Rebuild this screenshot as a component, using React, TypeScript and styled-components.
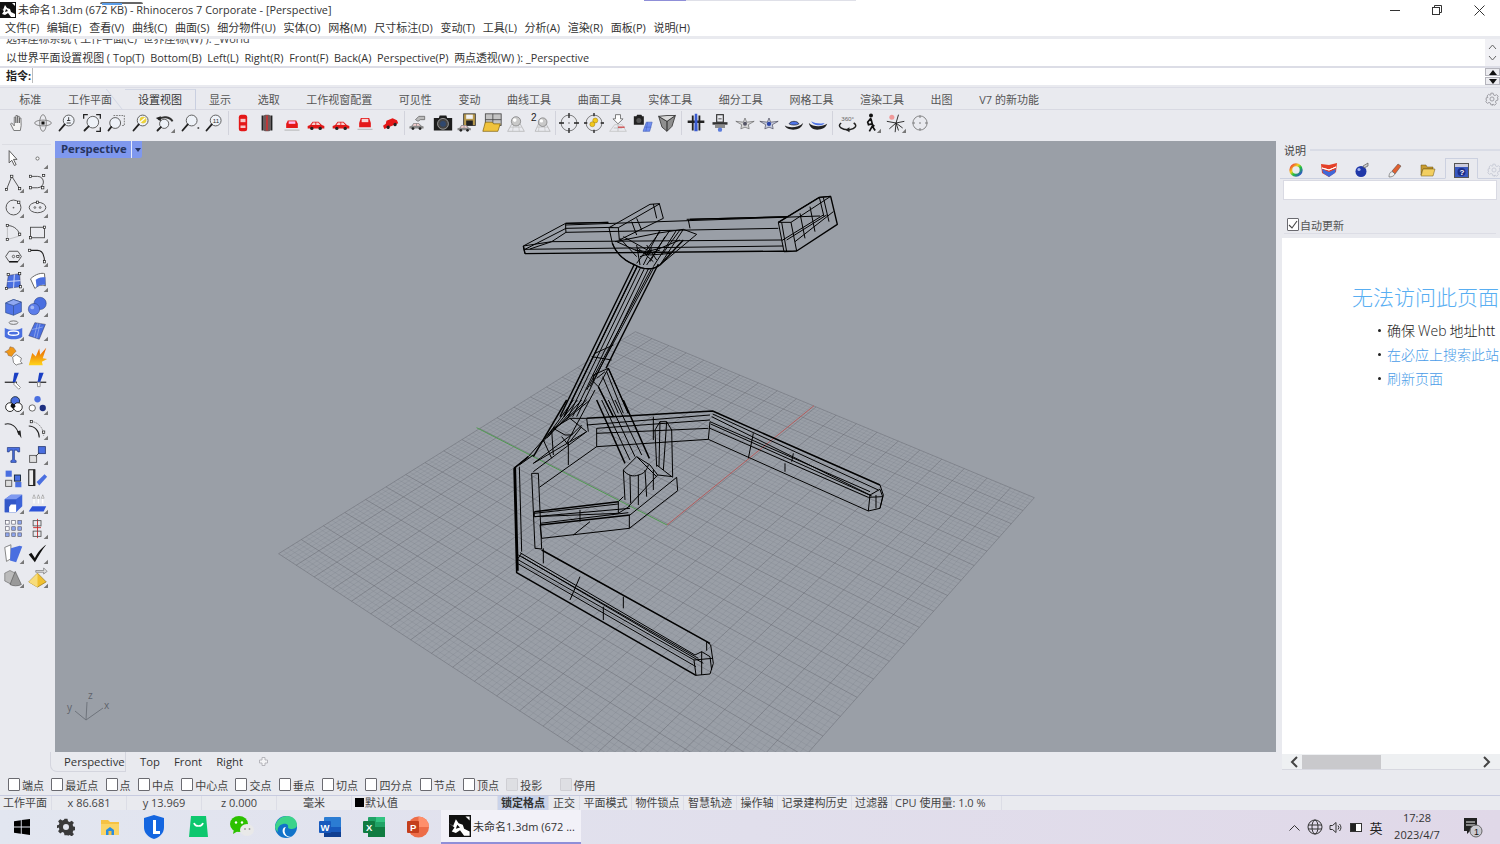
import React, { useMemo } from "react";
import styled, { createGlobalStyle } from "styled-components";

const FONT = `"Open Sans", "Noto Sans CJK SC", sans-serif`;

const Global = createGlobalStyle`
  html, body { margin: 0; padding: 0; background: #e9eaef; overflow: hidden; }
  * { box-sizing: border-box; }
`;

const Page = styled.div`
  width: 1500px; height: 844px; display: flex; flex-direction: column; position: relative;
  overflow: hidden; background: #e9eaef; font-family: ${FONT}; font-size: 11px; color: #333;
`;

/* ---------- title + menu ---------- */
const TitleBar = styled.div`
  height: 20px; background: #fff; display: flex; align-items: center; position: relative; flex: none;
`;
const TitleText = styled.span`
  font-size: 10.9px; margin-left: 2px; color: #333; white-space: nowrap; line-height: 20px;
`;
const WindowBtns = styled.div`
  margin-left: auto; display: flex; height: 20px;
`;
const WinBtn = styled.div`
  width: 42px; display: flex; align-items: center; justify-content: center;
`;
const PreviewGhost = styled.div`
  position: absolute; left: 100px; top: 2px; width: 43px; height: 6px;
  border-top: 2px solid #666; border-radius: 2px;
  &::before { content: ""; position: absolute; left: 2px; top: -1px; width: 20px; height: 2px; background: #5c9ee8; }
`;
const TopEdge = styled.div`
  position: absolute; left: 644px; top: 0; width: 212px; height: 1px;
  background: linear-gradient(90deg, #8f8fd8 0 42px, #dfe0e8 42px);
`;
const MenuBar = styled.div`
  height: 16px; background: #fff; display: flex; align-items: center; padding-left: 5px; gap: 7.7px; flex: none;
`;
const MenuItem = styled.span`
  font-size: 11px; color: #333; white-space: nowrap; line-height: 16px;
`;
const ThinGap = styled.div<{ $h: number }>`
  height: ${(p) => p.$h}px; flex: none; background: #e9eaef;
`;

/* ---------- command area ---------- */
const History = styled.div`
  height: 29px; flex: none; background: #fff; border-bottom: 2px solid #dcdde6; display: flex; position: relative;
`;
const HistoryText = styled.div`
  flex: 1; padding-left: 6px; overflow: hidden; position: relative;
`;
const ClippedLine = styled.div`
  font-size: 10.9px; line-height: 14px; margin-top: -7px; white-space: nowrap; color: #444;
`;
const HistoryLine = styled.div`
  font-size: 10.9px; line-height: 14px; margin-top: 5px; white-space: nowrap; color: #333;
`;
const ScrollSide = styled.div`
  width: 15px; background: #f1f1f5; display: flex; flex-direction: column; align-items: center;
  justify-content: space-around; padding: 2px 0;
`;
const CommandRow = styled.div`
  height: 17px; flex: none; background: #fff; display: flex; align-items: center;
`;
const CmdLabel = styled.b`
  font-size: 11px; margin-left: 6px; margin-top: -2px; width: 27px; border-right: 1px solid #bbb; line-height: 15px; color: #222;
`;
const Spinner = styled.div`
  margin-left: auto; width: 15px; height: 17px; display: flex; flex-direction: column; gap: 1px; background: #fff;
`;
const SpinBtn = styled.div`
  flex: 1; background: #ececf0; border: 1px solid #b4b4bc; display: flex; align-items: center; justify-content: center;
`;

/* ---------- tabs + main toolbar ---------- */
const TabBar = styled.div`
  height: 23px; flex: none; border-top: 1px solid #dcdde6; border-bottom: 1px solid #d8d9e2;
  display: flex; align-items: flex-end; padding-left: 6px; position: relative;
`;
const Tab = styled.div<{ $active?: boolean }>`
  padding: 0 13.3px; font-size: 11px; height: 21px; line-height: 23px; white-space: nowrap; color: #555;
  position: relative; top: ${(p) => (p.$active ? 1 : 0)}px;
  ${(p) => p.$active && `
    padding: 0 12.8px; border-top: 1px solid #d3d7e4; border-right: 1px solid #c9cfe0; color: #333; line-height: 20px;
    &::before { content: ""; position: absolute; left: -11px; bottom: 0; width: 24px; height: 21px;
      border-left: 1px solid #d3d7e4; transform: skewX(38deg); }
  `}
`;
const TabGear = styled.div`
  position: absolute; right: 1px; top: 4px; width: 14px; height: 14px;
`;
const Toolbar = styled.div`
  height: 31px; flex: none; display: flex; align-items: flex-start; padding: 1px 0 0 6px;
`;
const Slot = styled.div`
  width: 24.5px; height: 24px; display: flex; align-items: center; justify-content: center; flex: none;
`;
const Sep = styled.div`
  width: 1px; height: 24px; background: #d2d3dc; margin: 0 1.5px; flex: none;
`;

/* ---------- work area ---------- */
const Work = styled.div`
  height: 631px; flex: none; display: flex;
`;
const WorkLeft = styled.div`
  width: 1276px; flex: none; display: flex; flex-direction: column;
`;
const MainRow = styled.div`
  height: 611px; display: flex; flex: none;
`;
const SideTools = styled.div`
  width: 55px; flex: none; padding: 5px 0 0 1px; position: relative;
  &::before { content: ""; position: absolute; left: 2px; right: 4px; top: 3px; height: 1px; background: #dcdde3; }
`;
const SideGrid = styled.div`
  display: grid; grid-template-columns: 24.5px 24.5px; grid-auto-rows: 24.7px;
`;
const Viewport = styled.div`
  flex: 1; background: #9a9fa7; position: relative; overflow: hidden;
`;
const ViewSvg = styled.svg`
  display: block; width: 1221px; height: 611px;
`;
const ViewTag = styled.div`
  position: absolute; left: 0; top: 0; height: 17px; width: 87px; background: #7f98ee; display: flex; align-items: center;
  border-bottom-right-radius: 2px;
`;
const ViewTagText = styled.b`
  font-size: 11.3px; color: #26345f; padding-left: 6px; width: 77px; line-height: 15px; height: 17px; white-space: nowrap;
  border-right: 1px solid #e8ecfb;
`;
const ViewTagCaret = styled.span`
  width: 0; height: 0; margin-left: 3px; border: 3px solid transparent; border-top: 4px solid #26345f; margin-top: 4px;
`;
const ViewTabs = styled.div`
  height: 20px; flex: none; display: flex; align-items: flex-start; padding-left: 50px;
`;
const ViewTab = styled.div<{ $active?: boolean }>`
  font-size: 11.3px; color: #333; white-space: nowrap; line-height: 19px; padding: 0 7px;
  ${(p) => p.$active && `
    padding: 0 0 0 13px; margin-right: 7px; border-right: 1px solid #d4d5de; width: 76px; height: 20px;
    border-left: 1px solid #d4d5de; border-bottom: 1px solid #d4d5de; border-bottom-left-radius: 7px;
  `}
`;
const PlusIcon = styled.svg`
  margin: 5px 0 0 9px;
`;

/* ---------- right panel ---------- */
const Panel = styled.div`
  width: 224px; flex: none; padding-left: 6px; display: flex; flex-direction: column;
`;
const PanelHead = styled.div`
  height: 17px; display: flex; align-items: center; padding-left: 2px; gap: 4px;
  font-size: 11px; color: #444; &::after { content: ""; flex: 1; height: 2px; background: #d9dce6; }
`;
const PanelTabs = styled.div`
  height: 21px; display: flex; border-bottom: 1px solid #ccd1e0; margin-left: -2px; align-items: flex-start;
`;
const PanelTab = styled.div<{ $active?: boolean }>`
  width: 33px; height: 20px; display: flex; align-items: center; justify-content: center; flex: none; padding: 4px 2px 0 0;
  ${(p) => p.$active && `
    border: 1px solid #ccd1e0; border-bottom: 1px solid #e9eaef; height: 21px; padding: 3px 0 0 0;
  `}
`;
const SearchBox = styled.div`
  height: 20px; margin: 1px 3px 0 1px; background: #fff; border: 1px solid #d9dae3;
`;
const AutoRow = styled.label`
  display: flex; align-items: center; gap: 1px; margin: 17px 4px 0 5px; height: 15px; font-size: 11px; color: #555;
`;
const CheckBox = styled.span<{ $disabled?: boolean }>`
  width: 12px; height: 13px; flex: none; border: 1px solid ${(p) => (p.$disabled ? "#cfcfd4" : "#6a6a70")}; display: flex;
  align-items: center; justify-content: center; border-radius: 1px;
  background: ${(p) => (p.$disabled ? "#dedfe3" : "#fff")};
`;
const Rule = styled.div`
  height: 1px; background: #dcdde5; margin: 1px 4px 0 2px;
`;
const Browser = styled.div`
  height: 516px; background: #fff; margin-top: 4px; overflow: hidden; padding: 44px 0 0 70px; white-space: nowrap;
`;
const Heading = styled.div`
  font-family: "Noto Sans CJK SC", sans-serif; font-weight: 300; font-size: 21px; line-height: 28px; color: #58aef2;
`;
const BulletList = styled.ul`
  list-style: none; margin: 8px 0 0; padding: 0 0 0 35px;
`;
const Bullet = styled.li<{ $link?: boolean }>`
  font-family: "Noto Sans CJK SC", sans-serif; font-weight: 300; font-size: 14px; height: 24px; line-height: 24px; position: relative;
  color: ${(p) => (p.$link ? "#4a9ce8" : "#222")};
  &::before { content: ""; position: absolute; left: -9px; top: 11px; width: 3px; height: 3px; border-radius: 50%; background: #222; }
`;
const WebWord = styled.span`
  margin: 0 3px; font-family: "Open Sans", sans-serif;
`;
const HScroll = styled.div`
  height: 16px; display: flex; align-items: center; background: #eef0f2; border-bottom: 1px solid #d7d8e0;
  padding: 0 8px 0 7px; flex: none;
`;
const HThumb = styled.div`
  width: 79px; height: 14px; background: #c9c9cc; margin-left: 3px;
`;
const Push = styled.div`
  flex: 1;
`;

/* ---------- osnap + status ---------- */
const Osnap = styled.div`
  height: 23px; flex: none; display: flex; align-items: flex-end; padding: 0 0 2px 8px; gap: 7.3px;
`;
const Snap = styled.div<{ $gapAfter?: number }>`
  display: flex; align-items: center; gap: 2px; font-size: 11px; color: #444; white-space: nowrap; height: 17px;
  margin-right: ${(p) => p.$gapAfter || 0}px;
`;
const Status = styled.div`
  height: 15px; flex: none; border-top: 1px solid #c7cbe0; display: flex; font-size: 11px; line-height: 14px; color: #444;
`;
const Cell = styled.div<{ $w: number; $center?: boolean; $on?: boolean }>`
  width: ${(p) => p.$w}px; flex: none; text-align: ${(p) => (p.$center ? "center" : "left")}; white-space: nowrap;
  border-right: 1px solid #dcdde6; padding-left: ${(p) => (p.$center ? 0 : 3)}px;
  ${(p) => p.$on && `background: #c9d3ea; font-weight: 700; color: #333;`}
`;
const Swatch = styled.span`
  display: inline-block; width: 9px; height: 9px; background: #000; margin-right: 1px;
`;

/* ---------- taskbar ---------- */
const Taskbar = styled.div`
  height: 34px; flex: none; display: flex; align-items: center; background: linear-gradient(90deg, #e2e6f0, #e0d8e8);
`;
const TaskIcon = styled.div`
  width: 44px; height: 34px; display: flex; align-items: center; justify-content: center; flex: none;
`;
const ActiveTask = styled.div`
  width: 140px; height: 34px; margin-left: 1px; background: #f2f1f8; border-bottom: 2px solid #8f8fd8; display: flex; align-items: center;
  padding-left: 8px; gap: 2px; font-size: 11px; color: #333; white-space: nowrap;
`;
const Tray = styled.div`
  margin-left: auto; display: flex; align-items: center; height: 34px;
`;
const TrayIcon = styled.div<{ $w: number }>`
  width: ${(p) => p.$w}px; display: flex; justify-content: center; align-items: center; font-size: 13px; color: #222; flex: none;
`;
const Clock = styled.div`
  width: 64px; text-align: center; font-size: 11px; line-height: 17px; color: #333; margin-left: 1px; padding-bottom: 2px;
`;
const Note = styled.div`
  width: 38px; margin-left: 5px; margin-right: 8px; display: flex; justify-content: center;
`;

/* ---------- icons ---------- */
const B = "#4a6fe0";
const Lb = "#8ea6ee";
const Car = ({ c = "#e01818", x = 0 }: { c?: string; x?: number }) => (
  <g transform={`translate(${x} 0)`}>
    <path d="M2 15.5l3-1 3-4h7l4 4 3 1v3H2z" fill={c} />
    <path d="M8.5 11.5h2.8v3H6.5zM12.3 11.5h2.4l2.4 3h-4.8z" fill="#f5d0d0" />
    <circle cx="7" cy="18.5" r="2" fill="#222" /><circle cx="17" cy="18.5" r="2" fill="#222" />
  </g>
);
const Lens = ({ cx = 14, cy = 9, r = 6.5 }: { cx?: number; cy?: number; r?: number }) => (
  <g>
    <circle cx={cx} cy={cy} r={r} fill="#eef2f8" stroke="#555" strokeWidth="1.1" />
    <path d={`M${cx - r * 0.72} ${cy + r * 0.72}L3 21`} stroke="#222" strokeWidth="2.2" strokeLinecap="round" />
  </g>
);
const Cube = () => (
  <g stroke="#34508f" strokeWidth=".8"><path d="M3 8l9-4 9 3v11l-9 4-9-3z" fill="#4f74e6" /><path d="M3 8l9 3 9-4-9-3z" fill="#8fa8f2" /><path d="M12 11v11" fill="none" /></g>
);
const Pt = ({ x, y }: { x: number; y: number }) => <rect x={x - 1.3} y={y - 1.3} width="2.6" height="2.6" fill="#fff" stroke="#222" strokeWidth=".8" />;
const Line = "#444";

const ICONS: Record<string, React.ReactNode> = {
  hand: <path d="M7 21l-4-8 1.5-1 3 3.5V5h1.6l.4 7V3h1.8l.4 9V4h1.8l.3 8V6h1.7l.3 9-1 6z" fill="#f4f4f4" stroke="#666" strokeWidth="1" />,
  orbit: <g fill="none" stroke="#777"><ellipse cx="12" cy="12" rx="4" ry="10" /><ellipse cx="12" cy="12" rx="10" ry="3.5" /><circle cx="12" cy="12" r="2.2" fill="#111" /></g>,
  zoomd: <g><Lens /><path d="M14 5v4M12 9h4M11.5 12h5" stroke="#222" fill="none" /></g>,
  zoomext: <g><Lens cx={13} cy={11} r={7} /><path d="M2 7V2h5M17 2h5v5M17 22h5v-5" fill="none" stroke="#222" strokeWidth="1.5" /></g>,
  zoomwin: <g><Lens cx={11} cy={12} r={6.5} /><path d="M9 3h13v12H19" fill="none" stroke="#666" strokeDasharray="2 1.2" /></g>,
  zoomsel: <g><Lens /><circle cx="14.5" cy="8.5" r="4" fill="#ecd23c" /><path d="M11 11l6-5" stroke="#fff" strokeWidth="1.5" /></g>,
  zoomback: <g><Lens cx={11} cy={13} r={5.5} /><path d="M4 8a10 8 0 0 1 17 2" fill="none" stroke="#333" strokeWidth="2.4" /><path d="M1 6l6-2v6z" fill="#222" /><path d="M24 19v5h-5z" fill="#777" /></g>,
  zoomout: <g><Lens /><rect x="21" y="17" width="2" height="2" fill="#444" /></g>,
  zoom11: <g><Lens /><text x="10.5" y="12" fontSize="7.5" fill="#333" fontFamily="Liberation Sans">11</text></g>,
  cartop: <g><rect x="7" y="2" width="10" height="20" rx="3" fill="#e41818" /><rect x="9" y="7" width="6" height="4" fill="#f6c7c7" /><rect x="9" y="15" width="6" height="3" fill="#f6c7c7" /></g>,
  carbot: <g><rect x="5.5" y="3" width="2.5" height="18" fill="#222" /><rect x="16" y="3" width="2.5" height="18" fill="#222" /><rect x="8" y="2" width="8" height="20" rx="2" fill="#6d5a5a" /><rect x="11" y="3" width="2" height="18" fill="#c33" /></g>,
  carback: <g><path d="M5 18v-5l2-4h10l2 4v5z" fill="#e41818" /><rect x="8" y="10" width="8" height="3" fill="#fbe" /><rect x="3" y="20" width="18" height="1" fill="#aaa" /></g>,
  carside: <Car />,
  carside2: <Car />,
  carfront: <g><path d="M5 17v-5l2-6h10l2 6v5z" fill="#e41818" /><rect x="8" y="7" width="8" height="4" fill="#f7d5d5" /><rect x="3" y="19" width="18" height="1" fill="#aaa" /></g>,
  carpersp: <g transform="rotate(-22 12 12)"><path d="M3 12l4-1 2-3h8l4 4v4H3z" fill="#e41818" /><circle cx="8" cy="16" r="2" fill="#222" /><circle cx="17" cy="16" r="2" fill="#222" /></g>,
  carcam: <g><g transform="translate(0 3) scale(.85)"><Car c="#888" /></g><path d="M9 8l4-4h7v4h-5l-3 2z" fill="#bbb" stroke="#555" strokeWidth=".8" /></g>,
  camera: <g><path d="M1 6h6l1-3h8l1 3h6v15H1z" fill="#1d1d1d" /><circle cx="12" cy="13" r="6.5" fill="#444" stroke="#aaa" /><circle cx="12" cy="13" r="3.5" fill="#30486e" /></g>,
  save: <g><rect x="8" y="1" width="14" height="14" fill="#b99a4d" stroke="#333" /><rect x="11" y="2" width="8" height="5" fill="#f2f2f2" /><rect x="11" y="9" width="8" height="6" fill="#222" /><g transform="translate(-1 6) scale(.8)"><Car c="#888" /></g></g>,
  folder: <g><rect x="4" y="1" width="19" height="14" fill="#c4c4c4" stroke="#444" /><path d="M13 1v14M4 8h19" stroke="#444" /><path d="M1 22l3-11h8l2 2h8l-3 9z" fill="#f0c33c" stroke="#7a5a00" strokeWidth=".8" /></g>,
  ball: <g><path d="M2 22l5-9h10l5 9z" fill="none" stroke="#aaa" strokeWidth=".8" /><path d="M9 13L8 22M15 13l1 9M5 17h14" stroke="#bbb" strokeWidth=".7" /><circle cx="12" cy="10" r="5.6" fill="#c9c9c9" stroke="#555" strokeWidth=".6" /><circle cx="10.5" cy="8.5" r="2.2" fill="#fff" /></g>,
  ball2: <g><path d="M5 22l4-9h9l5 9z" fill="none" stroke="#aaa" strokeWidth=".8" /><path d="M10 13l-1 9M16 13l1 9M7 17h14" stroke="#bbb" strokeWidth=".7" /><circle cx="14" cy="11" r="5.2" fill="#c9c9c9" stroke="#555" strokeWidth=".6" /><circle cx="12.5" cy="9.5" r="2" fill="#fff" /><text x="0" y="10" fontSize="12" fill="#222" fontFamily="Liberation Sans">2</text></g>,
  target: <g fill="none"><circle cx="12" cy="12" r="9.5" stroke="#555" strokeWidth=".9" /><path d="M12 0v6M12 18v6M0 12h6M18 12h6" stroke="#222" strokeWidth="1.6" /><circle cx="12" cy="12" r="1" fill="#666" /></g>,
  targety: <g fill="none"><circle cx="12" cy="12" r="9.5" stroke="#555" strokeWidth=".9" /><path d="M12 0v4M12 20v4M0 12h4M20 12h4" stroke="#222" strokeWidth="1.6" /><circle cx="13.5" cy="9" r="3" fill="#f2c81c" stroke="#8a6a00" strokeWidth=".5" /><circle cx="10" cy="13.5" r="3" fill="#f2c81c" stroke="#8a6a00" strokeWidth=".5" /></g>,
  plane: <g><path d="M2 22l6-8h9l5 8z" fill="none" stroke="#bbb" strokeWidth=".8" /><path d="M7 18h10M12 14v8" stroke="#bbb" /><path d="M12 17h8" stroke="#c33" strokeWidth="1.4" /><path d="M9 2h6v5h3l-6 6-6-6h3z" fill="#fff" stroke="#555" strokeWidth=".9" /></g>,
  campl: <g><path d="M1 4h3l1-2h5l1 2h2v10H1z" fill="#222" /><circle cx="7" cy="9" r="3" fill="#555" /><path d="M12 22l4-11h7l-3 11z" fill="#6f8df0" stroke="#3e5bb8" strokeWidth=".7" /><path d="M14 17h8M17.5 11l-2 11" stroke="#3e5bb8" strokeWidth=".6" /></g>,
  cubev: <g stroke="#333"><path d="M2 4l10 6 10-7-4 13-6 6-6-5z" fill="#8f8f8f" /><path d="M2 4l10-1 10 0-10 7z" fill="#d9d9d9" /><path d="M12 10v12" fill="none" strokeWidth="1.4" /></g>,
  pltop: <g><path d="M2 9h20v3H2z" fill="#222" /><path d="M10.5 1h3l.5 21h-4z" fill="#3a5bd0" /><rect x="7" y="3" width="2.2" height="18" fill="#222" /><rect x="15" y="3" width="2.2" height="18" fill="#222" /></g>,
  plfront: <g><rect x="3" y="11" width="18" height="3" fill="#333" /><rect x="8" y="2" width="8" height="9" fill="none" stroke="#333" strokeWidth="1.4" /><path d="M6 14h12v4H6z" fill="#8c8c8c" /><circle cx="12" cy="20" r="2.6" fill="#5a7bdc" /><path d="M10 7h4" stroke="#333" /></g>,
  star1: <g><path d="M1 10l9 1 2-5 2 5 9-1-7 4 1 5-5-2-5 2 1-5z" fill="#d8d8d8" stroke="#555" strokeWidth=".7" /><circle cx="12" cy="13" r="2.4" fill="#556" /></g>,
  star2: <g><path d="M1 10l9 1 2-5 2 5 9-1-7 4 1 5-5-2-5 2 1-5z" fill="#c8cde0" stroke="#334" strokeWidth=".7" /><circle cx="12" cy="13" r="2.6" fill="#2d46a8" /></g>,
  ufo1: <g><path d="M1 15c5 3 16 3 22-3-2 6-6 8-12 8-5 0-9-2-10-5z" fill="#222" /><path d="M6 13c2-4 10-4 12 0-3 2-9 2-12 0z" fill="#4f74e6" stroke="#222" strokeWidth=".8" /></g>,
  ufo2: <g><path d="M1 12c5 5 16 5 22 1-2 5-6 7-12 7-5 0-9-3-10-8z" fill="#222" /><path d="M4 10c4 3 13 3 16 2-2 4-14 4-16-2z" fill="#4f74e6" /></g>,
  r360: <g><text x="5" y="9" fontSize="7.500" fill="#666" fontFamily="Liberation Sans">360°</text><path d="M5 12c-6 4 2 9 10 8 7-1 10-5 5-8" fill="none" stroke="#222" strokeWidth="1.8" /><path d="M15 17v6l-5-3z" fill="#222" /></g>,
  walker: <g><circle cx="12" cy="3" r="2.4" fill="#111" /><path d="M12 6l-4 5 1 3 4-1 3 3M12 7l2 8-4 7M13 15l4 6" fill="none" stroke="#111" strokeWidth="2" /><path d="M24 19v5h-5z" fill="#777" /></g>,
  spark: <g><circle cx="7" cy="5" r="3" fill="#f09a9a" /><path d="M12 12L1 10M12 12l10-2M12 12L4 19M12 12l8 6M12 12l-1 11M12 12l3-10M12 12l3 9" stroke="#222" strokeWidth="1.1" /><path d="M24 19v5h-5z" fill="#777" /></g>,
  target2: <g fill="none"><circle cx="12" cy="12" r="8.5" stroke="#666" strokeWidth=".9" /><path d="M12 3v3M12 18v3M3 12h3M18 12h3" stroke="#666" /><circle cx="12" cy="12" r=".8" fill="#555" /></g>,

  select: <path d="M7 3l0 14 3-3 3 6 2-1-3-6h4z" fill="#fff" stroke="#555" strokeWidth="1.1" />,
  point: <circle cx="12" cy="12" r="1.8" fill="#fff" stroke="#666" />,
  polyline: <g><path d="M4 20L10 5l9 14" fill="none" stroke={Line} /><Pt x={4} y={20} /><Pt x={10} y={5} /><Pt x={19} y={19} /></g>,
  curve: <g><path d="M4 5h8c9 0 9 13 0 13H5" fill="none" stroke={Line} /><Pt x={4} y={5} /><Pt x={19} y={4} /><Pt x={4} y={18} /><Pt x={18} y={18} /></g>,
  circle: <g><circle cx="12" cy="12" r="8.5" fill="none" stroke={Line} /><circle cx="12" cy="12" r="1" fill="#666" /><Pt x={18} y={6} /></g>,
  ellipse: <g><ellipse cx="12" cy="12" rx="9.5" ry="6" fill="none" stroke={Line} /><Pt x={12} y={6} /><circle cx="9" cy="12" r="1" fill="none" stroke="#555" /><circle cx="15" cy="12" r="1" fill="none" stroke="#555" /></g>,
  arc: <g><path d="M5 4c8 0 14 6 14 12" fill="none" stroke={Line} /><path d="M5 4v16l14-4" fill="none" stroke="#888" strokeWidth=".5" /><Pt x={5} y={4} /><Pt x={19} y={14} /><Pt x={5} y={20} /></g>,
  rect: <g><rect x="4" y="6" width="16" height="12" fill="none" stroke={Line} /><Pt x={4} y={18} /><Pt x={20} y={6} /></g>,
  polygon: <g><path d="M7 6h10l4 6-4 6H7l-4-6z" fill="none" stroke={Line} /><path d="M7 18h10" stroke="#111" strokeWidth="1.6" /><circle cx="12" cy="12" r="1.4" fill="none" stroke="#555" /><Pt x={17} y={12} /></g>,
  fillet: <g><path d="M3 5h9c6 0 8 5 8 14" fill="none" stroke="#222" strokeWidth="1.2" /><Pt x={3} y={5} /><Pt x={20} y={18} /></g>,
  srfpts: <g><path d="M6 5l13-2 1 15-16 2z" fill={B} stroke="#224" strokeWidth=".5" /><path d="M13 4l-1 16M5 12l15-1" stroke="#dfe5fa" /><Pt x={6} y={4} /><Pt x={19} y={3} /><Pt x={4} y={20} /><Pt x={20} y={18} /></g>,
  srfedge: <g><path d="M4 9c6-6 13-7 16-6l1 14c-5-2-9 0-12 3z" fill="#fff" stroke="#555" /><path d="M10 10c4-3 7-3 11-3v9c-4-1-8 0-10 3z" fill={B} /></g>,
  box: <Cube />,
  spheres: <g><circle cx="15" cy="8.5" r="7" fill={B} stroke="#2c3f7a" strokeWidth=".6" /><circle cx="8" cy="15" r="6.5" fill="#5c7dea" stroke="#2c3f7a" strokeWidth=".6" /><circle cx="6" cy="13" r="2.2" fill="#a3b6f3" /></g>,
  cyl: <g><ellipse cx="12" cy="3" rx="5" ry="2" fill="none" stroke="#666" /><path d="M2 9c5 3 15 3 20 0v10c-5 4-15 4-20 0z" fill={B} /><ellipse cx="12" cy="15" rx="6" ry="2.4" fill="none" stroke="#fff" strokeWidth="1.6" /></g>,
  patch: <g><path d="M9 3l12 2-7 17L2 18z" fill={B} stroke="#224" strokeWidth=".5" /><path d="M5 11l13-3M12 4L8 20M15 4l-4 17" stroke="#aabbf0" strokeWidth=".7" /></g>,
  puzzle: <g><path d="M2 8l5-3 1-3 4 1 3 4-3 3-2 3-4-1-1-3z" fill="#f09818" stroke="#754" strokeWidth=".5" /><path d="M11 14l4-3 3 2 3 2-1 4 2 2-5 1-2 1-3-3z" fill="#fff" stroke="#444" strokeWidth=".7" /></g>,
  burst: <g><path d="M2 23L6 9l4 4 4-9 1 7 7-8-4 12 5 1-6 3 1 4z" fill="url(#bg)" /><defs><linearGradient id="bg" x1="0" y1="0" x2="0" y2="1"><stop offset="0" stopColor="#e65c00" /><stop offset="1" stopColor="#ffd31a" /></linearGradient></defs></g>,
  trim: <g><path d="M2 14h14" stroke="#222" strokeWidth="1.4" /><path d="M13 3h5l-4 11h-3z" fill="#1a3fc4" /><path d="M14 14l6 6-2 2-6-6z" fill="#fff" stroke="#888" /></g>,
  split: <g><path d="M2 14h20" stroke="#222" strokeWidth="1.4" /><path d="M14 3h5l-4 11h-3z" fill="#1a3fc4" /><path d="M12 14v5h3v-5z" fill="#fff" stroke="#888" /></g>,
  bool: <g><circle cx="14" cy="8" r="5" fill={B} stroke="#123" /><circle cx="8" cy="15" r="5" fill="#fff" stroke="#111" /><circle cx="17" cy="15" r="5" fill="#fff" stroke="#111" /><path d="M9.500 11a4.500 4.500 0 0 1 5 3l-3 3-3-3z" fill="#111" /></g>,
  dots: <g><circle cx="12" cy="6" r="3.6" fill={B} /><circle cx="6" cy="16" r="3.6" fill="#fff" stroke="#555" /><circle cx="18" cy="16" r="3.6" fill="#1d2f80" /></g>,
  ext: <g><path d="M2 6c7-2 14 2 16 12" fill="none" stroke="#222" strokeWidth="1.2" /><path d="M16 14l5 8-1-9z" fill="#222" /></g>,
  offset: <g><path d="M5 3c7 0 14 7 14 16" fill="none" stroke="#777" strokeDasharray="1.5 1" /><path d="M2 8c7 0 12 6 12 13" fill="none" stroke="#222" strokeWidth="1.2" /><Pt x={5} y={3} /><Pt x={19} y={15} /></g>,
  textT: <path d="M5 4h14v5h-2l-1-2h-3v11l2 1v2H9v-2l2-1V7H8L7 9H5z" fill={B} stroke="#243a80" strokeWidth=".8" />,
  move: <g><rect x="3" y="13" width="8" height="8" fill="#ddd" stroke="#555" /><rect x="13" y="3" width="8" height="8" fill={B} stroke="#2c3f7a" /><path d="M10 14l4-4" stroke="#333" /></g>,
  group: <g><rect x="3" y="3" width="7" height="7" fill={B} /><rect x="13" y="8" width="7" height="7" fill={B} stroke="#123" /><rect x="3" y="14" width="7" height="7" fill="#ddd" stroke="#555" /><rect x="14" y="16" width="7" height="6" fill={B} /></g>,
  mirror: <g><rect x="2" y="2" width="7" height="18" fill="#eee" stroke="#222" strokeWidth="1.2" /><rect x="7" y="2" width="2" height="18" fill="#222" /><path d="M11 16l9-9 3 3-9 10z" fill={B} /></g>,
  bsolid: <g><path d="M2 7l7-5h13v13l-7 7H2z" fill="#3c63d8" /><path d="M2 7h13v15H2z" fill="#3358c8" /><path d="M9 13h6v9H7v-6z" fill="#fff" /><path d="M2 7l7-5h13l-7 5z" fill="#7f9af0" /></g>,
  extr: <g><path d="M2 21l4-6h16l-3 6z" fill="#2e54d8" /><path d="M8 12V4M13 12V4M18 12V4" stroke="#fff" strokeWidth="1.4" /><path d="M6.500 6L8 2l1.500 4zM11.500 6L13 2l1.500 4zM16.500 6L18 2l1.500 4z" fill="#fff" stroke="#444" strokeWidth=".4" /></g>,
  array: <g>{[3, 10, 17].map((y) => [3, 10, 17].map((x) => <rect key={`${x}${y}`} x={x} y={y} width="4" height="4" fill={x + y < 14 ? "#fff" : Lb} stroke="#556" strokeWidth=".7" />))}</g>,
  gumline: <g><path d="M12 1v22" stroke="#c22" strokeWidth="1" /><rect x="7" y="3" width="9" height="6" fill="none" stroke="#555" /><rect x="7" y="15" width="9" height="6" fill="none" stroke="#555" /><path d="M7 11h9" stroke="#c22" /></g>,
  hide: <g><path d="M2 5l7-3v16l-5 3z" fill="#fff" stroke="#777" /><path d="M9 6l10-3 3 1-7 18-7-2z" fill={B} /></g>,
  check: <path d="M2 13l3-2 4 6C12 11 17 5 22 2 17 8 13 15 9 22z" fill="#111" />,
  shapes: <g><path d="M2 7l6-3 6 3v10l-6 2-6-3z" fill="#bbb" stroke="#555" strokeWidth=".6" /><path d="M14 5l7 15c-3 2-10 2-13 0z" fill="#999" stroke="#444" strokeWidth=".6" /></g>,
  pyramid: <g><path d="M12 7l10 10-10 6-10-6z" fill="#f0c030" stroke="#7a5a00" strokeWidth=".6" /><path d="M12 7v16l-10-6z" fill="#f7dc7a" /><path d="M10 4h9v-3l4 4-4 3V6h-9z" fill="#ddd" stroke="#555" strokeWidth=".6" /></g>,
};

const MORE = new Set(["point", "polyline", "curve", "circle", "ellipse", "arc", "rect", "polygon", "fillet", "srfpts", "srfedge", "box", "spheres", "cyl", "patch", "bool", "dots", "offset", "move", "bsolid", "extr", "gumline", "hide", "check", "shapes", "pyramid"]);

const Ic = ({ n, s = 20 }: { n: string; s?: number }) => (
  <svg width={s} height={s} viewBox="0 0 24 24" aria-hidden="true">
    {ICONS[n]}
    {MORE.has(n) && <path d="M24 19v5h-5z" fill="#777" />}
  </svg>
);

const TOP: string[] = ["hand", "orbit", "zoomd", "zoomext", "zoomwin", "zoomsel", "zoomback", "zoomout", "zoom11", "|", "cartop", "carbot", "carback", "carside", "carside2", "carfront", "carpersp", "|", "carcam", "camera", "save", "folder", "ball", "ball2", "|", "target", "targety", "plane", "campl", "cubev", "|", "pltop", "plfront", "star1", "star2", "ufo1", "ufo2", "|", "r360", "walker", "spark", "target2"];
const SIDE = ["select", "point", "polyline", "curve", "circle", "ellipse", "arc", "rect", "polygon", "fillet", "srfpts", "srfedge", "box", "spheres", "cyl", "patch", "puzzle", "burst", "trim", "split", "bool", "dots", "ext", "offset", "textT", "move", "group", "mirror", "bsolid", "extr", "array", "gumline", "hide", "check", "shapes", "pyramid"];

const MENUS = ["文件(F)", "编辑(E)", "查看(V)", "曲线(C)", "曲面(S)", "细分物件(U)", "实体(O)", "网格(M)", "尺寸标注(D)", "变动(T)", "工具(L)", "分析(A)", "渲染(R)", "面板(P)", "说明(H)"];
const TABS = ["标准", "工作平面", "设置视图", "显示", "选取", "工作视窗配置", "可见性", "变动", "曲线工具", "曲面工具", "实体工具", "细分工具", "网格工具", "渲染工具", "出图", "V7 的新功能"];
const SNAPS = ["端点", "最近点", "点", "中点", "中心点", "交点", "垂点", "切点", "四分点", "节点", "顶点"];

/* ---------- 3D wireframe, coordinates traced from the picture ---------- */
const TOPFRAME_THIN = [
  "M130 168L257 100L385 97M257 100L257 115L258 127M135 178L258 115L400 112M130 168L135 191M133 178L910 168",
  "M130 168L215 155L905 150M258 127L895 115M257 105L1020 78M620 88L925 80M625 90L630 115",
  "M215 155L258 127M150 177L215 155M905 97L920 185M1030 22L1047 95M905 152L1030 75M920 150L1040 75M945 155L1060 65M1018 22L1032 80",
  "M895 97L1018 22M933 97L1052 19M895 97L933 97M895 97L912 185M933 97L950 183M1018 22L1052 19M960 70L975 145M990 50L1005 125",
  "M387 113L510 43L538 41L550 85M415 113L540 41M387 113L415 113L418 150L550 85M520 42L530 85M387 113L397 160M470 85L485 120M455 95L470 135",
  "M397 160C410 195 440 215 465 225C490 240 520 240 540 225L650 133L610 118L530 130L405 155M610 118L540 225M590 120L520 230M570 120L500 225M540 125L470 220",
  "M470 165L480 225M410 155L465 180L500 185L540 175L600 150M465 180L510 195L575 190M540 120L500 195M600 120L545 195M430 140L520 190M500 165L530 210M480 200L540 180M475 175L520 215M515 175L490 225M555 140L510 215M420 145L470 200",
  "M472 228L252 680M482 232L265 680M493 236L278 680M505 237L290 680M522 232L330 590M515 235L320 600M345 490L400 465M335 500L395 510",
  "M340 555L385 535L445 670M340 575L355 590L400 680M340 555L340 575M355 590L385 535M350 565L375 545M368 560L415 670M380 545L430 670M345 600L260 760",
];
const TOPFRAME_THICK = [
  "M135 191L950 183L1072 103L1052 19M130 168L135 191M895 97L1018 22M257 100L385 97M630 88L925 80M1018 22L1052 19M912 185L950 183",
  "M397 160C410 195 440 215 465 225C490 240 520 240 540 225L610 150",
  "M462 225L240 680M472 228L252 680M535 222L400 490L378 535M385 535L445 670M355 590L400 680",
];
const BASE_THIN = [
  "M88 200L95 455M125 220L135 445L155 447L145 220L125 220M72 205L115 170M88 195L130 165M82 478L612 780M90 458L615 765M82 490L618 800M95 460L82 478M95 470L640 790M85 465L625 775",
  "M320 85L320 140L655 118L660 65M320 85L660 60M320 100L655 85M290 75L660 45M490 50L490 120M655 118L1135 333M665 50L1140 285M668 42L1165 270M660 65L1140 275M660 85L1135 292M662 72L1145 288",
  "M320 140L148 262M290 95L130 215M130 190L250 100M790 100L775 175M910 160L905 185M885 190L885 215",
  "M133 335L133 350L385 340L385 305M133 350L420 325M155 415L418 385L418 345M150 375L155 415M418 385L563 272M420 345L560 232L563 272M400 290L385 305M385 340L420 318M133 340L385 312M150 370L415 338",
  "M503 225L415 320M503 225L548 230L545 90L530 65L510 65L495 90L500 200M510 65L507 200M530 65L520 210M500 195L548 232",
  "M400 210L405 300M445 225L445 315M420 225L422 310M400 210L440 170L480 195L503 225M400 210C410 225 430 232 445 225C460 222 470 212 475 195M440 170L500 230M465 210L470 290M490 210L490 270",
  "M115 170L190 85L240 55L290 95L240 125L130 190M190 85L225 105L245 105L275 75M240 55L290 55L295 95M160 120L185 175M185 90L190 165M215 110L235 135M235 125L235 195M275 80L240 125",
  "M335 0L420 180M355 0L435 170M375 0L455 165M300 0L190 90M275 0L175 110M250 0L160 125M290 0L180 100M262 0L170 115",
  "M1135 333L1170 325L1180 285L1170 255M1140 285L1170 268L1178 290L1170 325M1140 285L1135 333M1158 285V325M1135 292L1178 290",
  "M618 826L660 822L670 790L662 735L650 725M615 765L635 755L660 770L665 810M612 780L668 775M635 755V825M612 780L618 826M650 725V752",
  "M240 600L270 530M340 660V620M400 590V625M160 490V445M270 330V365M250 405L300 365",
];
const BASE_THICK = [
  "M290 55L668 33L1170 255M72 205L80 518L618 826M155 450L660 730M133 335L385 305M150 375L420 345M72 205L115 170M76 203L84 512M320 0L405 190M400 0L478 175M230 0L130 170",
];

const LEFT: [number, number] = [278.6, 553.7];
const TOPC: [number, number] = [635.3, 331.7];
const RIGHT: [number, number] = [1034.3, 497.7];
const BOTTOM: [number, number] = [726, 845.3];

function buildGrid() {
  const [x0, y0] = LEFT, [x1, y1] = TOPC, [x2, y2] = RIGHT, [x3, y3] = BOTTOM;
  const dx1 = x1 - x2, dx2 = x3 - x2, sx = x0 - x1 + x2 - x3;
  const dy1 = y1 - y2, dy2 = y3 - y2, sy = y0 - y1 + y2 - y3;
  const den = dx1 * dy2 - dx2 * dy1;
  const g = (sx * dy2 - dx2 * sy) / den, h = (dx1 * sy - sx * dy1) / den;
  const a = x1 - x0 + g * x1, b = x3 - x0 + h * x3, d = y1 - y0 + g * y1, e = y3 - y0 + h * y3;
  const P = (u: number, v: number) => {
    const w = g * u + h * v + 1;
    return `${((a * u + b * v + x0) / w).toFixed(1)} ${((d * u + e * v + y0) / w).toFixed(1)}`;
  };
  let minor = "", major = "";
  const N = 100;
  for (let i = 0; i <= N; i++) {
    const t = i / N;
    const seg = `M${P(t, 0)}L${P(t, 1)}M${P(0, t)}L${P(1, t)}`;
    if (i % 5 === 0) major += seg; else minor += seg;
  }
  return { minor, major };
}

const Wireframe = () => {
  const grid = useMemo(buildGrid, []);
  return (
    <ViewSvg viewBox="55 141 1221 611" aria-hidden="true">
      <path d={grid.minor} stroke="#6f747d" strokeWidth=".45" fill="none" opacity=".42" />
      <path d={grid.major} stroke="#62666f" strokeWidth=".7" fill="none" opacity=".65" />
      <path d="M476.600 427.700L667 525" stroke="#4f9b4f" strokeWidth="1" fill="none" />
      <path d="M667 525L814 405.700" stroke="#b35c5c" strokeWidth="1" fill="none" />
      <g fill="none" stroke="#000" strokeLinejoin="round">
        <g transform="translate(490 400) scale(.33333)">
          {BASE_THIN.map((p, i) => <path key={i} d={p} strokeWidth="1" vectorEffect="non-scaling-stroke" />)}
          {BASE_THICK.map((p, i) => <path key={i} d={p} strokeWidth="1.5" vectorEffect="non-scaling-stroke" />)}
        </g>
        <g transform="translate(480 190) scale(.33333)">
          {TOPFRAME_THIN.map((p, i) => <path key={i} d={p} strokeWidth="1" vectorEffect="non-scaling-stroke" />)}
          {TOPFRAME_THICK.map((p, i) => <path key={i} d={p} strokeWidth="1.4" vectorEffect="non-scaling-stroke" />)}
        </g>
      </g>
      <g stroke="#6f747c" strokeWidth="1" fill="none"><path d="M86 720L87 702M86 720L103 708M86 720L75 711" /></g>
      <g fill="#5f636b" fontSize="10" fontFamily="Open Sans">
        <text x="88" y="699">z</text><text x="104" y="709">x</text><text x="67" y="711">y</text>
      </g>
    </ViewSvg>
  );
};

const RhinoLogo = ({ s = 16 }: { s?: number }) => (
  <svg width={s} height={s} viewBox="0 0 16 16" aria-hidden="true">
    <rect width="16" height="16" fill="#111" />
    <path d="M0 6l3 2 2-5 2 3 3 1 1 3 4 2v3H11L8 11 5 13 2 12 4 9z" fill="#fff" />
    <path d="M6 7l2 2-3 1zM11 1l2 4-3-2z" fill="#111" />
    <path d="M12 1h3v3z" fill="#fff" />
  </svg>
);

const Gear = ({ c = "#9a9aa0", s = 14 }: { c?: string; s?: number }) => (
  <svg width={s} height={s} viewBox="0 0 24 24" fill="none" stroke={c} strokeWidth="1.6" aria-hidden="true">
    <circle cx="12" cy="12" r="3.5" />
    <path d="M10 2h4l.6 3 2.6 1.100 2.600-1.600 2.800 2.800-1.600 2.600L22 10v4l-3 .6-1.100 2.600 1.600 2.600-2.800 2.800-2.600-1.500-2.100.9L14 22h-4l-.6-3-2.600-1.100-2.600 1.600-2.800-2.800 1.600-2.600L2 14v-4l3-.6L3.400 6.800l2.800-2.800 2.600 1.600L10 5z" />
  </svg>
);

const PanelIcons = {
  color: (
    <svg width="16" height="16" viewBox="0 0 16 16"><circle cx="8" cy="8" r="5.200" fill="none" stroke="url(#rb)" strokeWidth="3" /><defs><linearGradient id="rb" x1="0" y1="0" x2="1" y2="1"><stop offset="0" stopColor="#f03030" /><stop offset=".35" stopColor="#f0d020" /><stop offset=".6" stopColor="#20c040" /><stop offset="1" stopColor="#3040e0" /></linearGradient></defs></svg>
  ),
  layers: (
    <svg width="18" height="16" viewBox="0 0 18 16"><path d="M1 2l8 1 8-2-1 9-7 5-7-4z" fill="#e44028" /><path d="M2 7l7 3 7-3-1 4-6 4-6-4z" fill="#4068d8" /><path d="M2 6l7 2 7-3-7 3z" fill="#fff" stroke="#fff" /></svg>
  ),
  ball: (
    <svg width="16" height="16" viewBox="0 0 16 16"><circle cx="7" cy="9.500" r="5.500" fill="#2038a8" /><circle cx="5" cy="7.500" r="1.600" fill="#a0b0f0" /><path d="M9 4l5-3v3l-4 2z" fill="#ccc" stroke="#444" strokeWidth=".6" /></svg>
  ),
  brush: (
    <svg width="14" height="16" viewBox="0 0 14 16"><path d="M4 9l6-7 3 2-6 8z" fill="#e06030" stroke="#444" strokeWidth=".5" /><path d="M1 15c0-4 2-6 4-5l2 2c-1 2-3 3-6 3z" fill="#eee" stroke="#555" strokeWidth=".6" /></svg>
  ),
  open: (
    <svg width="16" height="14" viewBox="0 0 16 14"><path d="M1 2h5l1 2h6v2H3L1 12z" fill="#c89c30" stroke="#6a5010" strokeWidth=".5" /><path d="M3 6h12l-2 7H1z" fill="#f3cf60" stroke="#6a5010" strokeWidth=".5" /></svg>
  ),
  help: (
    <svg width="15" height="15" viewBox="0 0 15 15"><rect x=".5" y=".5" width="14" height="14" fill="#3858c0" stroke="#555" /><rect x="1" y="1" width="13" height="3" fill="#ccd" /><circle cx="7.500" cy="9" r="4" fill="#1c2e88" /><text x="5.500" y="12" fontSize="8" fontWeight="700" fill="#fff" fontFamily="Liberation Sans">?</text></svg>
  ),
};

const TaskIcons = {
  win: <svg width="16" height="16" viewBox="0 0 16 16"><path d="M0 2.200l6.800-1v6.300H0zM7.700 1L16 0v7.500H7.700zM0 8.400h6.800v6.400L0 13.800zM7.700 8.400H16V16l-8.300-1.200z" fill="#000" /></svg>,
  gear: <svg width="18" height="18" viewBox="0 0 24 24"><path fillRule="evenodd" d="M10 1h4l.7 3.200 2.200 1 2.800-1.700 2.800 2.800-1.700 2.800.9 2.200 3.300.7v4l-3.200.7-1 2.200 1.700 2.800-2.800 2.800-2.800-1.700-2.200.9L14 23h-4l-.7-3.200-2.200-1-2.800 1.700-2.800-2.800 1.700-2.800-.9-2.200L-1 14v-4l3.200-.7 1-2.200-1.700-2.800 2.800-2.800 2.800 1.700 2.200-.9zM12 8a4 4 0 1 0 0 8 4 4 0 0 0 0-8z" fill="#3a3a3a" /></svg>,
  folder: <svg width="20" height="20" viewBox="0 0 20 20"><path d="M1 3h7l2 2h9v13H1z" fill="#f6c243" /><rect x="1" y="7" width="18" height="11" fill="#fad466" /><path d="M6 18v-5l4-3 4 3v5z" fill="#2a8ce0" /><rect x="8.500" y="14" width="3" height="4" fill="#f6c243" /></svg>,
  shield: <svg width="20" height="24" viewBox="0 0 20 24"><path d="M10 0l10 3v9c0 6-4 10-10 12C4 22 0 18 0 12V3z" fill="#1466e0" /><path d="M9 5h3v11h4v3H9z" fill="#fff" /></svg>,
  bag: <svg width="19" height="22" viewBox="0 0 19 22"><path d="M2 0h15l2 21H0z" fill="#0dc76e" /><path d="M5 7c1 4 8 4 9 0" fill="none" stroke="#fff" strokeWidth="1.600" /></svg>,
  wechat: <svg width="24" height="22" viewBox="0 0 24 22"><ellipse cx="9" cy="8" rx="9" ry="8" fill="#2dc100" /><path d="M4 13l-1 5 5-3z" fill="#2dc100" /><ellipse cx="17" cy="14" rx="7" ry="6" fill="#e9e9e9" /><circle cx="6" cy="6.500" r="1.200" fill="#fff" /><circle cx="12" cy="6.500" r="1.200" fill="#fff" /><circle cx="15" cy="13" r=".9" fill="#999" /><circle cx="19.500" cy="13" r=".9" fill="#999" /></svg>,
  edge: <svg width="22" height="22" viewBox="0 0 22 22"><circle cx="11" cy="11" r="11" fill="#1173c9" /><path d="M0 11C1 3 8 0 12 0c6 0 10 4 10 9 0 3-3 4-6 4-2 0-3-1-3-2 1-2-2-4-5-3C4 9 2 12 3 16 1 14 0 13 0 11z" fill="#3cd38a" /><path d="M11 11c-3 0-4 3-3 6 1 3 5 5 9 4-3 0-6-1-7-4-1-2 0-5 1-6z" fill="#fff" /></svg>,
  word: <svg width="22" height="20" viewBox="0 0 22 20"><rect x="5" width="17" height="20" rx="1" fill="#2b7cd3" /><rect x="5" y="10" width="17" height="5" fill="#185abd" /><rect x="5" y="15" width="17" height="5" fill="#103f91" /><rect y="4" width="12" height="12" rx="1" fill="#185abd" /><text x="1.500" y="13.500" fontSize="9.500" fontWeight="700" fill="#fff" fontFamily="Liberation Sans">W</text></svg>,
  excel: <svg width="22" height="20" viewBox="0 0 22 20"><rect x="5" width="17" height="20" rx="1" fill="#21a366" /><rect x="5" y="10" width="17" height="10" fill="#107c41" /><rect x="13" width="9" height="5" fill="#33c481" /><rect y="4" width="12" height="12" rx="1" fill="#107c41" /><text x="3" y="13.500" fontSize="9.500" fontWeight="700" fill="#fff" fontFamily="Liberation Sans">X</text></svg>,
  ppt: <svg width="22" height="22" viewBox="0 0 22 22"><circle cx="11.500" cy="11" r="10.500" fill="#ed6c47" /><path d="M11.500 .5A10.500 10.500 0 0 1 22 11H11.500z" fill="#ff8f6b" /><rect y="5" width="12" height="12" rx="1" fill="#c43e1c" /><text x="3" y="14.500" fontSize="9.500" fontWeight="700" fill="#fff" fontFamily="Liberation Sans">P</text></svg>,
};

export default function App() {
  return (
    <Page>
      <Global />
      <TitleBar>
        <RhinoLogo />
        <TitleText>未命名1.3dm (672 KB) - Rhinoceros 7 Corporate - [Perspective]</TitleText>
        <PreviewGhost />
        <TopEdge />
        <WindowBtns>
          <WinBtn><svg width="11" height="11" viewBox="0 0 11 11"><path d="M0 5.500h10" stroke="#333" /></svg></WinBtn>
          <WinBtn><svg width="11" height="11" viewBox="0 0 11 11" fill="none" stroke="#333"><rect x=".5" y="2.500" width="7" height="7" /><path d="M2.500 2.500V.5h7v7h-2" /></svg></WinBtn>
          <WinBtn><svg width="11" height="11" viewBox="0 0 11 11"><path d="M.5.5l10 10M10.500.5l-10 10" stroke="#333" /></svg></WinBtn>
        </WindowBtns>
      </TitleBar>
      <MenuBar>{MENUS.map((m) => <MenuItem key={m}>{m}</MenuItem>)}</MenuBar>
      <ThinGap $h={3} />
      <History>
        <HistoryText>
          <ClippedLine>选择座标系统 ( 工作平面(C)&nbsp; 世界座标(W) ): _World</ClippedLine>
          <HistoryLine>以世界平面设置视图 ( Top(T)&nbsp; Bottom(B)&nbsp; Left(L)&nbsp; Right(R)&nbsp; Front(F)&nbsp; Back(A)&nbsp; Perspective(P)&nbsp; 两点透视(W) ): _Perspective</HistoryLine>
        </HistoryText>
        <ScrollSide>
          <svg width="9" height="6" viewBox="0 0 9 6"><path d="M1 5l3.500-4L8 5" fill="none" stroke="#666" /></svg>
          <svg width="9" height="6" viewBox="0 0 9 6"><path d="M1 1l3.500 4L8 1" fill="none" stroke="#666" /></svg>
        </ScrollSide>
      </History>
      <CommandRow>
        <CmdLabel>指令:</CmdLabel>
        <Spinner>
          <SpinBtn><svg width="8" height="5" viewBox="0 0 8 5"><path d="M4 0l4 5H0z" fill="#111" /></svg></SpinBtn>
          <SpinBtn><svg width="8" height="5" viewBox="0 0 8 5"><path d="M4 5l4-5H0z" fill="#111" /></svg></SpinBtn>
        </Spinner>
      </CommandRow>
      <ThinGap $h={2} />
      <TabBar>
        {TABS.map((t) => <Tab key={t} $active={t === "设置视图"}>{t}</Tab>)}
        <TabGear><Gear /></TabGear>
      </TabBar>
      <Toolbar>
        {TOP.map((n, i) => (n === "|" ? <Sep key={i} /> : <Slot key={i}><Ic n={n} /></Slot>))}
      </Toolbar>
      <Work>
        <WorkLeft>
          <MainRow>
            <SideTools>
              <SideGrid>{SIDE.map((n) => <Slot key={n}><Ic n={n} s={21} /></Slot>)}</SideGrid>
            </SideTools>
            <Viewport>
              <Wireframe />
              <ViewTag><ViewTagText>Perspective</ViewTagText><ViewTagCaret /></ViewTag>
            </Viewport>
          </MainRow>
          <ViewTabs>
            <ViewTab $active>Perspective</ViewTab>
            <ViewTab>Top</ViewTab>
            <ViewTab>Front</ViewTab>
            <ViewTab>Right</ViewTab>
            <PlusIcon width="9" height="9" viewBox="0 0 9 9" aria-hidden="true"><path d="M3 .5h3v2.500h2.500v3H6v2.500H3V6H.5V3H3z" fill="#f4f4f6" stroke="#a8a8ae" strokeWidth=".8" /></PlusIcon>
          </ViewTabs>
        </WorkLeft>
        <Panel>
          <PanelHead>说明</PanelHead>
          <PanelTabs>
            <PanelTab>{PanelIcons.color}</PanelTab>
            <PanelTab>{PanelIcons.layers}</PanelTab>
            <PanelTab>{PanelIcons.ball}</PanelTab>
            <PanelTab>{PanelIcons.brush}</PanelTab>
            <PanelTab>{PanelIcons.open}</PanelTab>
            <PanelTab $active>{PanelIcons.help}</PanelTab>
            <PanelTab><Gear c="#c8cbd6" s={14} /></PanelTab>
          </PanelTabs>
          <SearchBox />
          <AutoRow>
            <CheckBox><svg width="10" height="10" viewBox="0 0 10 10"><path d="M1 5l3 3 5-7" fill="none" stroke="#444" strokeWidth="1.100" /></svg></CheckBox>
            自动更新
          </AutoRow>
          <Rule />
          <Browser>
            <Heading>无法访问此页面</Heading>
            <BulletList>
              <Bullet>确保<WebWord>Web</WebWord>地址htt</Bullet>
              <Bullet $link>在必应上搜索此站</Bullet>
              <Bullet $link>刷新页面</Bullet>
            </BulletList>
          </Browser>
          <HScroll>
            <svg width="10" height="12" viewBox="0 0 10 12"><path d="M8 1L3 6l5 5" fill="none" stroke="#444" strokeWidth="2" /></svg>
            <HThumb />
            <Push />
            <svg width="10" height="12" viewBox="0 0 10 12"><path d="M2 1l5 5-5 5" fill="none" stroke="#444" strokeWidth="2" /></svg>
          </HScroll>
        </Panel>
      </Work>
      <Osnap>
        {SNAPS.map((s) => <Snap key={s}><CheckBox />{s}</Snap>)}
        <Snap $gapAfter={10}><CheckBox $disabled />投影</Snap>
        <Snap><CheckBox $disabled />停用</Snap>
      </Osnap>
      <Status>
        <Cell $w={52}>工作平面</Cell>
        <Cell $w={75} $center>x 86.681</Cell>
        <Cell $w={75} $center>y 13.969</Cell>
        <Cell $w={75} $center>z 0.000</Cell>
        <Cell $w={75} $center>毫米</Cell>
        <Cell $w={146}><Swatch />默认值</Cell>
        <Cell $w={51} $center $on>锁定格点</Cell>
        <Cell $w={31} $center>正交</Cell>
        <Cell $w={52} $center>平面模式</Cell>
        <Cell $w={52} $center>物件锁点</Cell>
        <Cell $w={53} $center>智慧轨迹</Cell>
        <Cell $w={41} $center>操作轴</Cell>
        <Cell $w={74} $center>记录建构历史</Cell>
        <Cell $w={40} $center>过滤器</Cell>
        <Cell $w={110}>CPU 使用量: 1.0 %</Cell>
      </Status>
      <Taskbar>
        <TaskIcon>{TaskIcons.win}</TaskIcon>
        <TaskIcon>{TaskIcons.gear}</TaskIcon>
        <TaskIcon>{TaskIcons.folder}</TaskIcon>
        <TaskIcon>{TaskIcons.shield}</TaskIcon>
        <TaskIcon>{TaskIcons.bag}</TaskIcon>
        <TaskIcon>{TaskIcons.wechat}</TaskIcon>
        <TaskIcon>{TaskIcons.edge}</TaskIcon>
        <TaskIcon>{TaskIcons.word}</TaskIcon>
        <TaskIcon>{TaskIcons.excel}</TaskIcon>
        <TaskIcon>{TaskIcons.ppt}</TaskIcon>
        <ActiveTask><RhinoLogo s={22} />未命名1.3dm (672 ...</ActiveTask>
        <Tray>
          <TrayIcon $w={20}><svg width="11" height="7" viewBox="0 0 11 7"><path d="M.5 6.500l5-5 5 5" fill="none" stroke="#333" /></svg></TrayIcon>
          <TrayIcon $w={22}><svg width="16" height="16" viewBox="0 0 16 16" fill="none" stroke="#333"><circle cx="8" cy="8" r="7" /><ellipse cx="8" cy="8" rx="3" ry="7" /><path d="M1 6h14M1 10h14" /></svg></TrayIcon>
          <TrayIcon $w={18}><svg width="13" height="13" viewBox="0 0 13 13" fill="none" stroke="#333"><path d="M1 4.500h2.500L7 1.500v10l-3.500-3H1zM9 4.500a3 3 0 0 1 0 4M10.500 3a5 5 0 0 1 0 7" /></svg></TrayIcon>
          <TrayIcon $w={24}><svg width="13" height="9" viewBox="0 0 13 9"><rect x=".5" y=".5" width="11" height="8" fill="#fff" stroke="#333" /><rect x="1" y="1" width="5" height="7" fill="#222" /></svg></TrayIcon>
          <TrayIcon $w={16}>英</TrayIcon>
          <Clock>17:28<br />2023/4/7</Clock>
          <Note>
            <svg width="20" height="22" viewBox="0 0 20 22"><path d="M1 2h13v13H7l-3 3v-3H1z" fill="#222" /><path d="M3 6h9M3 9h9" stroke="#eee" /><circle cx="13" cy="15" r="6" fill="#c9c9d0" stroke="#666" /><text x="11" y="18.500" fontSize="9" fill="#111" fontFamily="Liberation Sans">1</text></svg>
          </Note>
        </Tray>
      </Taskbar>
    </Page>
  );
}
